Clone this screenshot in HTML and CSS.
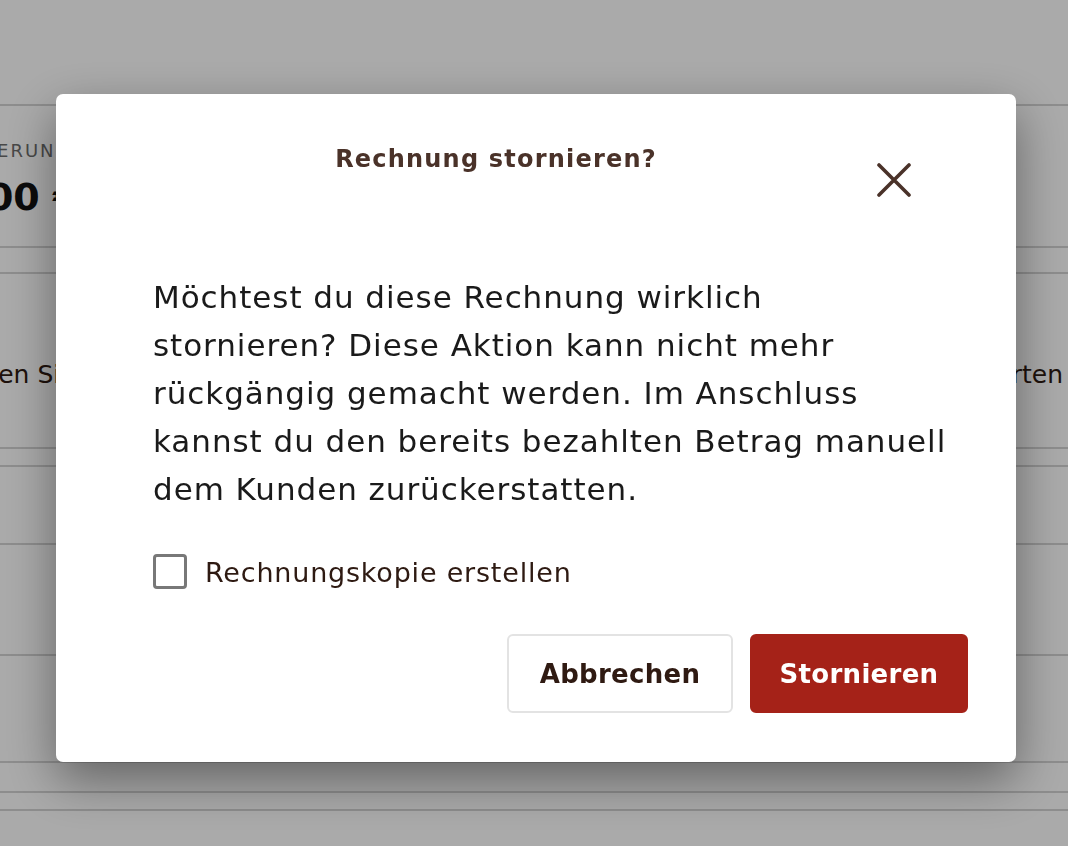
FILE: index.html
```html
<!DOCTYPE html>
<html lang="de">
<head>
<meta charset="utf-8">
<title>Rechnung stornieren</title>
<link rel="stylesheet" href="styles.css">
</head>
<body>
<div class="page">
  <div class="row r0"></div>
  <div class="row r1">
    <div class="summary">
      <div class="sum-label">LIEFERUNG</div>
      <div class="sum-amount">0,00 €</div>
    </div>
  </div>
  <div class="row r2"></div>
  <div class="row r3">
    <span class="cell-left">Wählen Sie</span>
    <span class="cell-right">Karten</span>
  </div>
  <div class="row r4"></div>
  <div class="row r5"></div>
  <div class="row r6"></div>
  <div class="row r7"></div>
  <div class="row r8"></div>
  <div class="row r9"></div>
</div>

<div class="overlay">
  <div class="modal" role="dialog" aria-labelledby="modal-title">
    <div class="modal-header">
      <h2 class="modal-title" id="modal-title">Rechnung stornieren?</h2>
      <button class="close-btn" aria-label="Schließen">
        <svg width="34" height="34" viewBox="0 0 34 34"><path d="M2 2 L32 32 M32 2 L2 32" stroke="#4a3229" stroke-width="3.6" stroke-linecap="round" fill="none"/></svg>
      </button>
    </div>
    <p class="modal-text">Möchtest du diese Rechnung wirklich<br>stornieren? Diese Aktion kann nicht mehr<br>rückgängig gemacht werden. Im Anschluss<br>kannst du den bereits bezahlten Betrag manuell<br>dem Kunden zurückerstatten.</p>
    <label class="check-row"><input type="checkbox" class="checkbox"><span class="check-label">Rechnungskopie erstellen</span></label>
    <div class="modal-actions">
      <button class="btn btn-secondary">Abbrechen</button>
      <button class="btn btn-danger">Stornieren</button>
    </div>
  </div>
</div>
</body>
</html>
```
FILE: styles.css
```css
* { box-sizing: border-box; }

html, body {
  margin: 0;
  padding: 0;
  background: #ffffff;
  font-family: "DejaVu Sans", "Liberation Sans", sans-serif;
  overflow: hidden;
}

.page {
  width: 1068px;
}

.row {
  border-bottom: 2px solid #d4d4d4;
}
.r0 { height: 106px; }
.r1 { height: 142px; }
.r2 { height: 26px; }
.r3 { height: 175px; }
.r4 { height: 18px; }
.r5 { height: 78px; }
.r6 { height: 111px; }
.r7 { height: 107px; }
.r8 { height: 30px; }
.r9 { height: 18px; }

.summary {
  padding-top: 34px;
  margin-left: -54px;
}
.sum-label {
  font-size: 18px;
  line-height: 22px;
  letter-spacing: 2px;
  color: #6c6c6c;
  padding-left: 6px;
}
.sum-amount {
  margin-top: 13px;
  font-size: 38px;
  line-height: 44px;
  font-weight: bold;
  color: #111111;
}

.r3 {
  display: flex;
  justify-content: space-between;
  padding-top: 86px;
  font-size: 25px;
  line-height: 30px;
  color: #2e1a12;
}
.cell-left { margin-left: -63px; }
.cell-right { margin-right: 5px; }

.overlay {
  position: fixed;
  inset: 0;
  background: rgba(0, 0, 0, 0.333);
  padding-top: 94px;
  padding-left: 56px;
}

.modal {
  width: 960px;
  background: #ffffff;
  border-radius: 7px;
  padding: 50px 48px 49px 97px;
  box-shadow: 0 18px 50px rgba(0, 0, 0, 0.42);
}

.modal-header {
  display: flex;
  align-items: flex-start;
}
.modal-title {
  flex: 1;
  margin: 0;
  text-align: center;
  font-size: 24px;
  line-height: 30px;
  font-weight: bold;
  letter-spacing: 1.2px;
  color: #4a3229;
}
.close-btn {
  margin: 19px 57px 0 38px;
  width: 34px;
  height: 34px;
  padding: 0;
  border: 0;
  background: none;
  display: block;
}
.close-btn svg { display: block; }

.modal-text {
  margin: 76px 0 0 0;
  font-size: 31px;
  line-height: 48px;
  letter-spacing: 0.95px;
  color: #1a1a1a;
  white-space: nowrap;
}

.check-row {
  margin-top: 41px;
  display: flex;
  align-items: center;
  gap: 18px;
  height: 34px;
}
.checkbox {
  appearance: none;
  -webkit-appearance: none;
  margin: 0;
  width: 34px;
  height: 35px;
  border: 3px solid #787878;
  border-radius: 4px;
  background: #ffffff;
}
.check-label {
  font-size: 27px;
  line-height: 34px;
  letter-spacing: 0.8px;
  color: #2e1a12;
  padding-top: 3px;
}

.modal-actions {
  margin-top: 46px;
  display: flex;
  justify-content: flex-end;
  gap: 17px;
}
.btn {
  height: 79px;
  padding: 0;
  border-radius: 6px;
  font-family: "DejaVu Sans", "Liberation Sans", sans-serif;
  font-size: 26px;
  font-weight: bold;
  letter-spacing: 0.3px;
  text-align: center;
}
.btn-secondary {
  width: 226px;
  background: #ffffff;
  border: 2px solid #e3e3e3;
  color: #2f1a12;
}
.btn-danger {
  width: 218px;
  background: #a52218;
  border: 2px solid #a52218;
  color: #ffffff;
}
```
